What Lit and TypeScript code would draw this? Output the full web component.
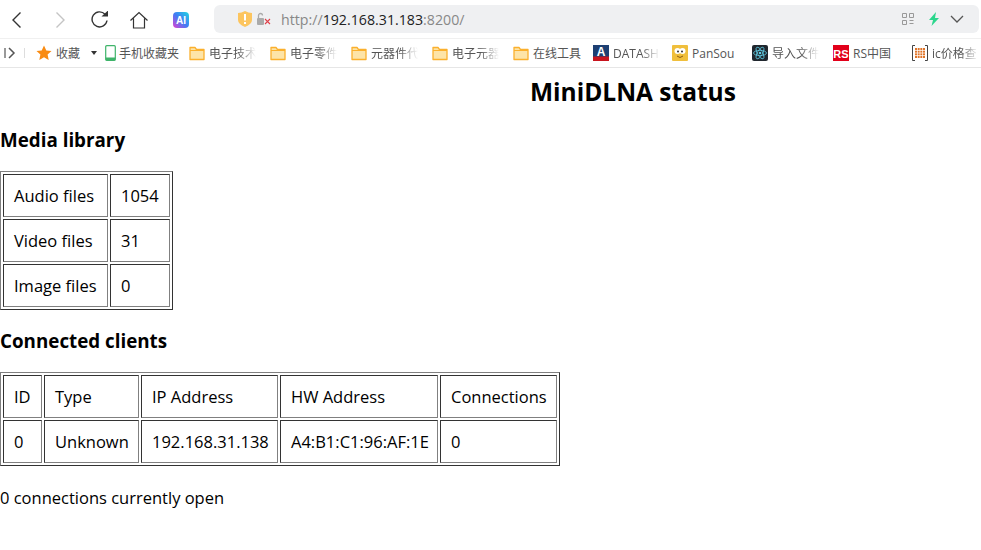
import { LitElement, html, css, svg } from 'lit';
import { customElement } from 'lit/decorators.js';

// bookmarks bar entries, icon kinds are drawn in bookmarkIcon()
const bookmarks = [
  { icon: 'folder', label: '电子技术', width: 81, fade: true },
  { icon: 'folder', label: '电子零件', width: 81, fade: true },
  { icon: 'folder', label: '元器件代', width: 81, fade: true },
  { icon: 'folder', label: '电子元器', width: 81, fade: true },
  { icon: 'folder', label: '在线工具', width: 80, fade: false },
  { icon: 'pdf', label: 'DATASH', width: 79, fade: true },
  { icon: 'pan', label: 'PanSou', width: 80, fade: false },
  { icon: 'react', label: '导入文件', width: 81, fade: true },
  { icon: 'rs', label: 'RS中国', width: 79, fade: false },
  { icon: 'ic', label: 'ic价格查', width: 69, fade: true },
];

const library = {
  cols: [105, 60],
  width: 173,
  rows: [
    ['Audio files', '1054'],
    ['Video files', '31'],
    ['Image files', '0'],
  ],
};

const clients = {
  cols: [39, 95, 137, 158, 117],
  width: 560,
  rows: [
    ['ID', 'Type', 'IP Address', 'HW Address', 'Connections'],
    ['0', 'Unknown', '192.168.31.138', 'A4:B1:C1:96:AF:1E', '0'],
  ],
};

function bookmarkIcon(kind: string) {
  switch (kind) {
    case 'folder':
      return svg`<path d="M1 2.500h5l1.500 2H15v10H1z" fill="#fde4a8" stroke="#fbb02d" stroke-width="1.300" stroke-linejoin="round"/><path d="M1 5.500h14" stroke="#fbb02d"/>`;
    case 'pdf':
      return svg`<rect width="16" height="16" fill="#1d3f72"/><rect y="11.500" width="16" height="4.500" fill="#c8141e"/><text x="8" y="11" font-family="Liberation Sans" font-size="12" font-weight="700" fill="#fff" text-anchor="middle">A</text>`;
    case 'pan':
      return svg`<rect width="16" height="16" rx="1" fill="#f0bf3c"/><circle cx="5.500" cy="6" r="3" fill="#fff"/><circle cx="10.500" cy="6" r="3" fill="#fff"/><circle cx="6" cy="6.500" r="1" fill="#333"/><circle cx="10" cy="6.500" r="1" fill="#333"/><path d="M5 11q3 3 6 0" fill="none" stroke="#8a5a12"/>`;
    case 'react':
      return svg`<rect width="16" height="16" rx="2" fill="#20272e"/><g fill="none" stroke="#5fc8e0" stroke-width=".8"><ellipse cx="8" cy="8" rx="6.500" ry="2.600"/><ellipse cx="8" cy="8" rx="6.500" ry="2.600" transform="rotate(60 8 8)"/><ellipse cx="8" cy="8" rx="6.500" ry="2.600" transform="rotate(120 8 8)"/></g><circle cx="8" cy="8" r="1.300" fill="#5fc8e0"/>`;
    case 'rs':
      return svg`<rect width="16" height="16" fill="#e2001a"/><text x="8" y="12.500" font-family="Liberation Sans" font-size="11" font-weight="700" fill="#fff" text-anchor="middle">RS</text>`;
    default:
      return svg`<path d="M3 .5H.5v15H3M13 .5h2.500v15H13" fill="none" stroke="#444"/><path d="M3 3h10v10H3z" fill="#e0752a"/><path d="M5.500 3v10M8 3v10M10.500 3v10M3 5.500h10M3 8h10M3 10.500h10" stroke="#fff" stroke-width=".7"/>`;
  }
}

@customElement('app-root')
export class AppRoot extends LitElement {
  static styles = css`
    :host {
      display: block;
      width: 981px;
      height: 550px;
      overflow: hidden;
      background: #fff;
      color: #000;
      font-family: 'Open Sans', 'Noto Sans', 'Noto Sans CJK SC', sans-serif;
    }
    svg {
      display: block;
      flex: none;
    }

    /* toolbar */
    .toolbar {
      display: flex;
      align-items: center;
      height: 38px;
      padding-left: 8px;
      box-sizing: border-box;
    }
    .nav {
      width: 18px;
      height: 18px;
      margin-top: 1px;
    }
    .nav.forward {
      margin-left: 25px;
    }
    .nav.reload {
      margin-left: 22px;
    }
    .nav.home {
      margin-left: 21px;
    }
    .nav.ai {
      margin-left: 25px;
    }
    .urlbar {
      display: flex;
      align-items: center;
      width: 765px;
      height: 28px;
      margin-left: 23px;
      padding: 0 15px 0 24px;
      box-sizing: border-box;
      background: #eff0f2;
      border-radius: 6px;
    }
    .url {
      margin-left: 10px;
      font-size: 14.200px;
      color: #888;
      flex: 1;
    }
    .url b {
      font-weight: 400;
      color: #222;
    }
    .url-tools {
      display: flex;
      align-items: center;
      gap: 14px;
    }
    .chevron {
      margin-left: -4px;
    }

    /* bookmarks bar */
    .bookmarks {
      display: flex;
      align-items: center;
      height: 30px;
      padding-left: 4px;
      box-sizing: border-box;
      border-top: 1px solid #f0f0f0;
      border-bottom: 1px solid #e6e6e6;
      font-size: 12px;
      color: #555;
      white-space: nowrap;
      overflow: hidden;
    }
    .collapse {
      width: 12px;
      height: 12px;
    }
    .sep {
      width: 1px;
      height: 10px;
      background: #ddd;
      margin: 0 11px 0 8px;
    }
    .star {
      display: flex;
      align-items: center;
      gap: 4px;
      width: 55px;
    }
    .caret {
      width: 0;
      height: 0;
      border: 3px solid transparent;
      border-top: 4px solid #333;
      border-bottom: 0;
      margin-right: 8px;
    }
    .phone {
      display: flex;
      align-items: center;
      gap: 3px;
      width: 84px;
    }
    .mark {
      display: flex;
      align-items: center;
      gap: 4px;
      flex: none;
    }
    .fade {
      width: 47px;
      overflow: hidden;
      -webkit-mask-image: linear-gradient(to right, #000 60%, transparent);
      mask-image: linear-gradient(to right, #000 60%, transparent);
    }

    /* status page */
    h1 {
      margin: 0;
      padding: 7px 0 0 530px;
      font-size: 24.500px;
      line-height: 33px;
      font-weight: 700;
      white-space: nowrap;
    }
    h3 {
      margin: 0;
      font-size: 18.800px;
      line-height: 26px;
      font-weight: 700;
    }
    .library-title {
      margin-top: 19px;
    }
    .clients-title {
      margin-top: 18px;
    }
    table {
      table-layout: fixed;
      border-width: 1px;
      border-style: solid;
      border-color: #808080 #333 #333 #808080;
      border-spacing: 2px;
      font-size: 16.500px;
      line-height: 22px;
    }
    td {
      box-sizing: border-box;
      height: 43px;
      border-width: 1px;
      border-style: solid;
      border-color: #333 #808080 #808080 #333;
      padding: 0 0 0 10px;
      white-space: nowrap;
      overflow: hidden;
    }
    .library {
      margin-top: 18px;
    }
    .clients {
      margin-top: 18px;
    }
    p {
      margin: 21px 0 0;
      font-size: 16.500px;
      line-height: 22px;
    }
  `;

  private renderTable(t: { cols: number[]; width: number; rows: string[][] }, cls: string) {
    return html`<table class=${cls} style="width:${t.width}px">
      <colgroup>${t.cols.map((w) => html`<col style="width:${w}px" />`)}</colgroup>
      ${t.rows.map((row) => html`<tr>${row.map((cell) => html`<td>${cell}</td>`)}</tr>`)}
    </table>`;
  }

  render() {
    return html`
      <div class="toolbar">
        <svg class="nav" viewBox="0 0 18 18"><path d="M12.500 1.500 5 9l7.500 7.500" fill="none" stroke="#333" stroke-width="1.400"/></svg>
        <svg class="nav forward" viewBox="0 0 18 18"><path d="M5.500 1.500 13 9l-7.500 7.500" fill="none" stroke="#c4c4c4" stroke-width="1.400"/></svg>
        <svg class="nav reload" viewBox="0 0 18 18"><path d="M14 3.200A7.500 7.500 0 1 0 16 9.500" fill="none" stroke="#333" stroke-width="1.400"/><path d="M10.500 5.500H17V-.5z" fill="#333"/></svg>
        <svg class="nav home" viewBox="0 0 18 18"><path d="M.5 9.500 9 1.500l8.500 8M3.500 7.500v9.500h11V7.500" fill="none" stroke="#333" stroke-width="1.200"/></svg>
        <svg class="nav ai" viewBox="0 0 18 18">
          <defs><linearGradient id="ai" x1="0" y1="1" x2="1" y2="0"><stop offset="0" stop-color="#e23fd0"/><stop offset=".5" stop-color="#3f7cf5"/><stop offset="1" stop-color="#20d8e0"/></linearGradient></defs>
          <rect width="16" height="16" y="1" rx="4" fill="url(#ai)"/>
          <text x="8" y="13" font-family="Liberation Sans" font-size="10" font-weight="700" fill="#fff" text-anchor="middle">AI</text>
        </svg>
        <div class="urlbar">
          <svg width="14" height="16" viewBox="0 0 14 16"><path d="M0 2q3.500 0 7-2 3.500 2 7 2v7q0 4-7 7-7-3-7-7z" fill="#fcc55f"/><path d="M6 3h2v6.500H6zM6 11h2v2H6z" fill="#fff"/></svg>
          <svg style="margin-left:5px" width="14" height="14" viewBox="0 0 14 14"><rect x="0" y="6" width="7" height="7" rx="1" fill="#aaa"/><path d="M1.500 6V3.500a2 2 0 0 1 4 0" fill="none" stroke="#aaa" stroke-width="1.300"/><path d="M8 7l5 5M13 7l-5 5" stroke="#e0404a" stroke-width="1.100"/></svg>
          <div class="url">http://<b>192.168.31.183</b>:8200/</div>
          <div class="url-tools">
            <svg width="12" height="12" viewBox="0 0 12 12" fill="none" stroke="#999"><path d="M.5.500h4v4h-4zM7.500.500h4v4h-4zM.5 7.500h4v4h-4zM7.500 7.500h4M7.500 10.500h4"/></svg>
            <svg width="12" height="14" viewBox="0 0 12 14"><path d="M8 0 1 8h4l-1.500 6L11 6H7z" fill="#2bd68c"/></svg>
            <svg class="chevron" width="14" height="8" viewBox="0 0 14 8"><path d="M1 1l6 6 6-6" fill="none" stroke="#555" stroke-width="1.300"/></svg>
          </div>
        </div>
      </div>
      <div class="bookmarks">
        <svg class="collapse" viewBox="0 0 12 12"><path d="M1 1v10" stroke="#777" stroke-width="1.500"/><path d="M5 1l5 5-5 5" fill="none" stroke="#555" stroke-width="1.500"/></svg>
        <div class="sep"></div>
        <div class="star">
          <svg width="16" height="16" viewBox="0 0 16 16"><path d="M8 .5l2.300 5 5.200.6-3.900 3.500 1.100 5.400L8 12.300 3.300 15l1.100-5.400L.5 6.100l5.200-.6z" fill="#f98b12"/></svg>
          <span>收藏</span>
        </div>
        <div class="caret"></div>
        <div class="phone">
          <svg width="11" height="16" viewBox="0 0 11 16"><rect x=".7" y=".7" width="9.600" height="14.600" rx="1" fill="none" stroke="#3fb46a" stroke-width="1.200"/><rect x=".7" y="12.500" width="9.600" height="2.800" fill="#3fb46a"/></svg>
          <span>手机收藏夹</span>
        </div>
        ${bookmarks.map(
          (b) => html`<div class="mark" style="width:${b.width}px">
            <svg width="16" height="16" viewBox="0 0 16 16">${bookmarkIcon(b.icon)}</svg>
            <span class=${b.fade ? 'fade' : ''}>${b.label}</span>
          </div>`
        )}
      </div>
      <h1>MiniDLNA status</h1>
      <h3 class="library-title">Media library</h3>
      ${this.renderTable(library, 'library')}
      <h3 class="clients-title">Connected clients</h3>
      ${this.renderTable(clients, 'clients')}
      <p>0 connections currently open</p>
    `;
  }
}
